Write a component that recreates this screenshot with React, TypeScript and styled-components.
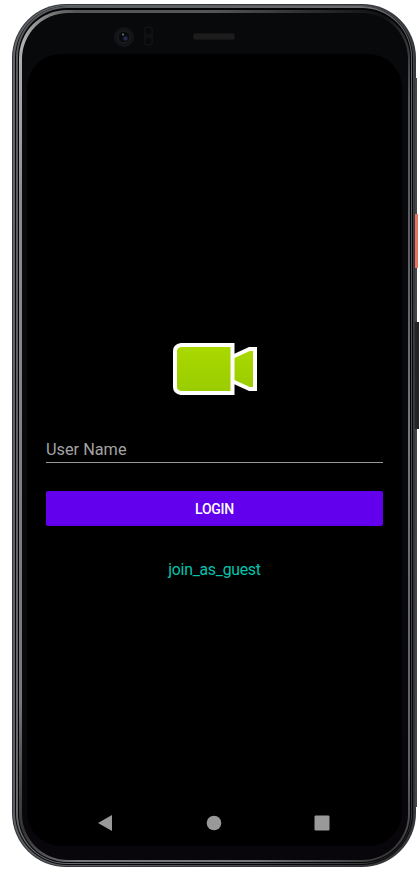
import React from "react";
import styled, { createGlobalStyle } from "styled-components";

const GlobalStyle = createGlobalStyle`
  * { box-sizing: border-box; }
  body { margin: 0; background: #fff; font-family: Roboto, sans-serif; overflow: hidden; }
`;

const Page = styled.main`
  width: 420px;
  height: 873px;
  padding: 4px 0 0 12px;
`;

const Phone = styled.div`
  position: relative;
  width: 404px;
  height: 863px;
`;

const SideKey = styled.span<{ $top: number; $height: number; $width: number; $tone: string }>`
  position: absolute;
  left: 403px;
  top: ${(p) => p.$top}px;
  width: ${(p) => p.$width}px;
  height: ${(p) => p.$height}px;
  background: ${(p) => p.$tone};
`;

const Shell = styled.div<{ $inset: string; $radius: number; $fill: string }>`
  width: 100%;
  height: 100%;
  padding: ${(p) => p.$inset};
  border-radius: ${(p) => p.$radius}px;
  background: ${(p) => p.$fill};
`;

const Bezel = styled.div`
  height: 100%;
  display: flex;
  flex-direction: column;
  padding: 0 6px 14px 5px;
  border-radius: 46px;
  background: linear-gradient(#08090b, #09090d 50%, #08060a);
`;

const SensorBar = styled.header`
  flex: 0 0 41px;
  display: flex;
  align-items: flex-start;
  padding: 12px 0 0 86px;
`;

const Speaker = styled.span`
  width: 42px;
  height: 7px;
  margin: 8px 0 0 40px;
  border-radius: 2px;
  background: #1c1c1d;
  border: 1px solid #141415;
`;

const Screen = styled.section`
  flex: 1;
  display: flex;
  flex-direction: column;
  border-radius: 34px;
  background: #000;
`;

const Form = styled.form`
  flex: 1;
  display: flex;
  flex-direction: column;
  align-items: center;
  padding: 284px 19px 0;
`;

const Logo = styled.svg`
  flex: none;
  filter: blur(0.4px);
`;

const UserInput = styled.input`
  width: 100%;
  height: 31px;
  margin-top: 34px;
  padding: 5px 0 0;
  border: 0;
  border-bottom: 1px solid #999;
  border-radius: 0;
  outline: 0;
  background: transparent;
  color: #fff;
  font: 16.3px Roboto, sans-serif;
  &::placeholder { color: #a3a3a3; opacity: 1; }
`;

const LoginButton = styled.button`
  width: 100%;
  height: 35px;
  margin-top: 28px;
  padding: 0;
  border: 0;
  border-radius: 2px;
  background: #6200ee;
  color: #fff;
  font: 500 14px Roboto, sans-serif;
  letter-spacing: -0.25px;
`;

const GuestLink = styled.a`
  margin-top: 34px;
  color: #03c4ae;
  font-size: 15.8px;
  letter-spacing: -0.25px;
  line-height: 20px;
`;

const NavBar = styled.nav`
  height: 48px;
  display: flex;
  justify-content: space-between;
  padding: 16px 72px 0 70px;
`;

const Camera = () => (
  <svg width="40" height="26" viewBox="0 0 40 26">
    <circle cx="11" cy="12" r="10" fill="#131416" />
    <circle cx="11" cy="12" r="6" fill="#080a0e" stroke="#202124" />
    <circle cx="12.5" cy="13.5" r="2.2" fill="#252a48" />
    <circle cx="10" cy="9.5" r="1" fill="#777a80" />
    <rect x="31" y="1" width="9" height="20" rx="4" fill="#101112" />
    <circle cx="35.5" cy="6" r="3" fill="#08090a" />
    <circle cx="35.5" cy="16" r="3" fill="#08090a" />
  </svg>
);

const VideoLogo = () => (
  <Logo width="88" height="60" viewBox="0 0 88 60">
    <defs>
      <linearGradient id="lime" x1="0" y1="0" x2="0" y2="1">
        <stop offset="0" stopColor="#abd900" />
        <stop offset="1" stopColor="#99cc00" />
      </linearGradient>
    </defs>
    <path d="M61 19L78.5 11H84V51H78.5L61 43Z" fill="url(#lime)" stroke="#fff" strokeWidth="4" />
    <path d="M10 7H61.5V55H10Q4 54 4 49V13Q4 8 10 7Z" fill="url(#lime)" stroke="#fff" strokeWidth="4" />
  </Logo>
);

export default function App() {
  return (
    <Page>
      <GlobalStyle />
      <Phone>
        <SideKey $top={74} $height={729} $width={2} $tone="#444547" />
        <SideKey $top={210} $height={54} $width={3} $tone="#e87562" />
        <SideKey $top={318} $height={107} $width={4} $tone="#222425" />
        <Shell $inset="1px 2px 1px 1px" $radius={54} $fill="#35373a">
          <Shell $inset="1px 1px 1px 2px" $radius={53} $fill="linear-gradient(100deg,#626569,#55575b 50%,#2c2d2f)">
            <Shell $inset="0 1px 1px 1px" $radius={52} $fill="#08090a">
              <Shell $inset="2px 1px 1px 2px" $radius={51} $fill="linear-gradient(110deg,#55575c,#696b6f 50%,#303133)">
                <Shell $inset="2px 1px 1px" $radius={49} $fill="#030405">
                  <Shell
                    $inset="3px 2px 2px 3px"
                    $radius={48}
                    $fill="conic-gradient(#555, #101112 22deg, #55565a 30deg, #77787b 90deg, #606064 150deg, #333 157deg, #77767a 175deg, #77767a 198deg, #333 206deg, #77777a 216deg, #8a8a8c 320deg, #b0b0b1 334deg, #555 342deg, #555 360deg)"
                  >
                    <Bezel>
                      <SensorBar><Camera /><Speaker /></SensorBar>
                      <Screen>
                        <Form onSubmit={(e) => e.preventDefault()}>
                          <VideoLogo />
                          <UserInput placeholder="User Name" aria-label="User Name" />
                          <LoginButton>LOGIN</LoginButton>
                          <GuestLink>join_as_guest</GuestLink>
                        </Form>
                        <NavBar>
                          <svg width="16" height="18" viewBox="0 0 16 18"><path d="M1 9L15 1V17Z" fill="#999" /></svg>
                          <svg width="16" height="18" viewBox="0 0 16 18"><circle cx="8" cy="9" r="7.3" fill="#999" /></svg>
                          <svg width="16" height="18" viewBox="0 0 16 18"><rect x=".5" y="1.5" width="15" height="15" rx="1.3" fill="#999" /></svg>
                        </NavBar>
                      </Screen>
                    </Bezel>
                  </Shell>
                </Shell>
              </Shell>
            </Shell>
          </Shell>
        </Shell>
      </Phone>
    </Page>
  );
}
